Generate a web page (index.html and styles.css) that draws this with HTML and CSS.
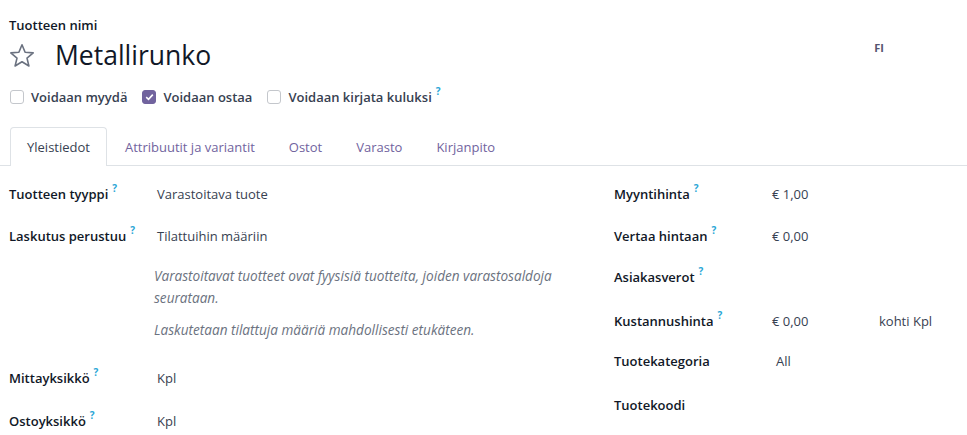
FILE: index.html
```html
<!DOCTYPE html>
<html lang="fi">
<head>
<meta charset="utf-8">
<title>Metallirunko</title>
<link rel="stylesheet" href="styles.css">
</head>
<body>
<div class="sheet">
  <div class="title-area">
    <div class="title-main">
      <div class="name-label">Tuotteen nimi</div>
      <div class="name-row">
        <svg class="star" width="26" height="25" viewBox="0 0 26 25" aria-hidden="true">
          <path d="M13 1.8 L16.1 9.3 L24.2 9.9 L18 15.1 L19.9 23 L13 18.7 L6.1 23 L8 15.1 L1.8 9.9 L9.9 9.3 Z" fill="none" stroke="#6b7280" stroke-width="1.6" stroke-linejoin="round"/>
        </svg>
        <h1 class="product-name">Metallirunko</h1>
      </div>
    </div>
    <div class="lang">FI</div>
  </div>

  <div class="options">
    <label class="opt"><span class="cb"></span><span>Voidaan myydä</span></label>
    <label class="opt"><span class="cb checked"><svg width="9" height="8" viewBox="0 0 9 8"><path d="M1.2 4.2 L3.5 6.3 L7.8 1.6" fill="none" stroke="#fff" stroke-width="1.6"/></svg></span><span>Voidaan ostaa</span></label>
    <label class="opt"><span class="cb"></span><span>Voidaan kirjata kuluksi<sup class="help">?</sup></span></label>
  </div>

  <div class="tabs">
    <div class="tab active">Yleistiedot</div>
    <div class="tab">Attribuutit ja variantit</div>
    <div class="tab">Ostot</div>
    <div class="tab">Varasto</div>
    <div class="tab">Kirjanpito</div>
  </div>

  <div class="form">
    <div class="group group-left">
      <div class="row r1"><div class="lbl">Tuotteen tyyppi<sup class="help">?</sup></div><div class="val">Varastoitava tuote</div></div>
      <div class="row r1"><div class="lbl">Laskutus perustuu<sup class="help">?</sup></div><div class="val">Tilattuihin määriin</div></div>
      <div class="note">
        <p>Varastoitavat tuotteet ovat fyysisiä tuotteita, joiden varastosaldoja seurataan.</p>
        <p>Laskutetaan tilattuja määriä mahdollisesti etukäteen.</p>
      </div>
      <div class="row r-unit"><div class="lbl">Mittayksikkö<sup class="help">?</sup></div><div class="val">Kpl</div></div>
      <div class="row"><div class="lbl">Ostoyksikkö<sup class="help">?</sup></div><div class="val">Kpl</div></div>
    </div>
    <div class="group group-right">
      <div class="row rr1"><div class="lbl">Myyntihinta<sup class="help">?</sup></div><div class="val">€ 1,00</div></div>
      <div class="row rr2"><div class="lbl">Vertaa hintaan<sup class="help">?</sup></div><div class="val">€ 0,00</div></div>
      <div class="row rr3"><div class="lbl">Asiakasverot<sup class="help">?</sup></div><div class="val"></div></div>
      <div class="row rr4"><div class="lbl">Kustannushinta<sup class="help">?</sup></div><div class="val cost"><span>€ 0,00</span><span>kohti Kpl</span></div></div>
      <div class="row rr5"><div class="lbl">Tuotekategoria</div><div class="val indent">All</div></div>
      <div class="row rr6"><div class="lbl">Tuotekoodi</div><div class="val"></div></div>
    </div>
  </div>
</div>
</body>
</html>
```

FILE: styles.css
```css
* { box-sizing: border-box; }
html, body { margin: 0; padding: 0; background: #fff; }
body {
  font-family: "Open Sans", "Noto Sans", sans-serif;
  font-size: 13px;
  color: #374151;
  overflow: hidden;
}
.sheet { width: 967px; height: 435px; }

.title-area {
  display: flex;
  justify-content: space-between;
  padding: 15px 0 0 9px;
}
.name-label {
  font-size: 13px;
  font-weight: 600;
  color: #111827;
  line-height: 20px;
}
.name-row {
  display: flex;
  align-items: center;
  gap: 20px;
  margin-top: 2px;
  height: 36px;
}
.product-name {
  margin: 0;
  font-size: 26.5px;
  font-weight: 400;
  color: #111827;
  line-height: 36px;
}
.lang {
  font-size: 11px;
  font-weight: 700;
  color: #55546f;
  margin: 25px 83px 0 0;
}

.options {
  display: flex;
  gap: 15px;
  padding: 14px 0 0 10px;
  height: 38px;
  align-items: flex-start;
}
.opt {
  display: flex;
  align-items: center;
  gap: 7px;
  font-weight: 600;
  font-size: 13px;
  color: #374151;
  line-height: 20px;
}
.cb {
  width: 14px;
  height: 14px;
  border: 1px solid #c4c7cc;
  border-radius: 3px;
  display: inline-flex;
  align-items: center;
  justify-content: center;
}
.cb.checked { background: #71639e; border-color: #71639e; }

.help {
  color: #2ba6d6;
  font-size: 10px;
  font-weight: 700;
  margin-left: 4px;
  vertical-align: baseline;
  line-height: 0;
  position: relative;
  top: -7px;
}

.tabs {
  display: flex;
  margin-top: 16px;
  padding-left: 10px;
  border-bottom: 1px solid #dee2e6;
  height: 39px;
}
.tab {
  padding: 0 16px;
  line-height: 38px;
  color: #71639e;
  font-size: 13px;
  border: 1px solid transparent;
  border-bottom: none;
  border-radius: 4px 4px 0 0;
}
.tab.active {
  color: #374151;
  border-color: #dee2e6;
  background: #fff;
  height: 39px;
  margin-right: 1px;
}

.form {
  display: grid;
  grid-template-columns: 605px 1fr;
  padding: 18px 0 0 9px;
}
.row {
  display: flex;
  line-height: 20px;
}
.lbl {
  font-weight: 600;
  color: #111827;
}
.group-left .lbl { width: 148px; }
.group-right .lbl { width: 158px; }
.val { color: #374151; }
.r1 { height: 42px; }
.note {
  margin-top: -3px;
  padding-left: 145px;
  width: 580px;
  font-style: italic;
  font-size: 13.6px;
  color: #6b7280;
  line-height: 22px;
}
.note p { margin: 0 0 10px 0; }
.r-unit { margin-top: 27px; height: 43px; }
.rr1 { height: 42px; }
.rr2 { height: 41px; }
.rr3 { height: 44px; }
.rr4 { height: 40px; }
.rr5 { height: 44px; }
.cost { display: flex; }
.cost span:first-child { width: 107px; }
.indent { padding-left: 4px; }
```
